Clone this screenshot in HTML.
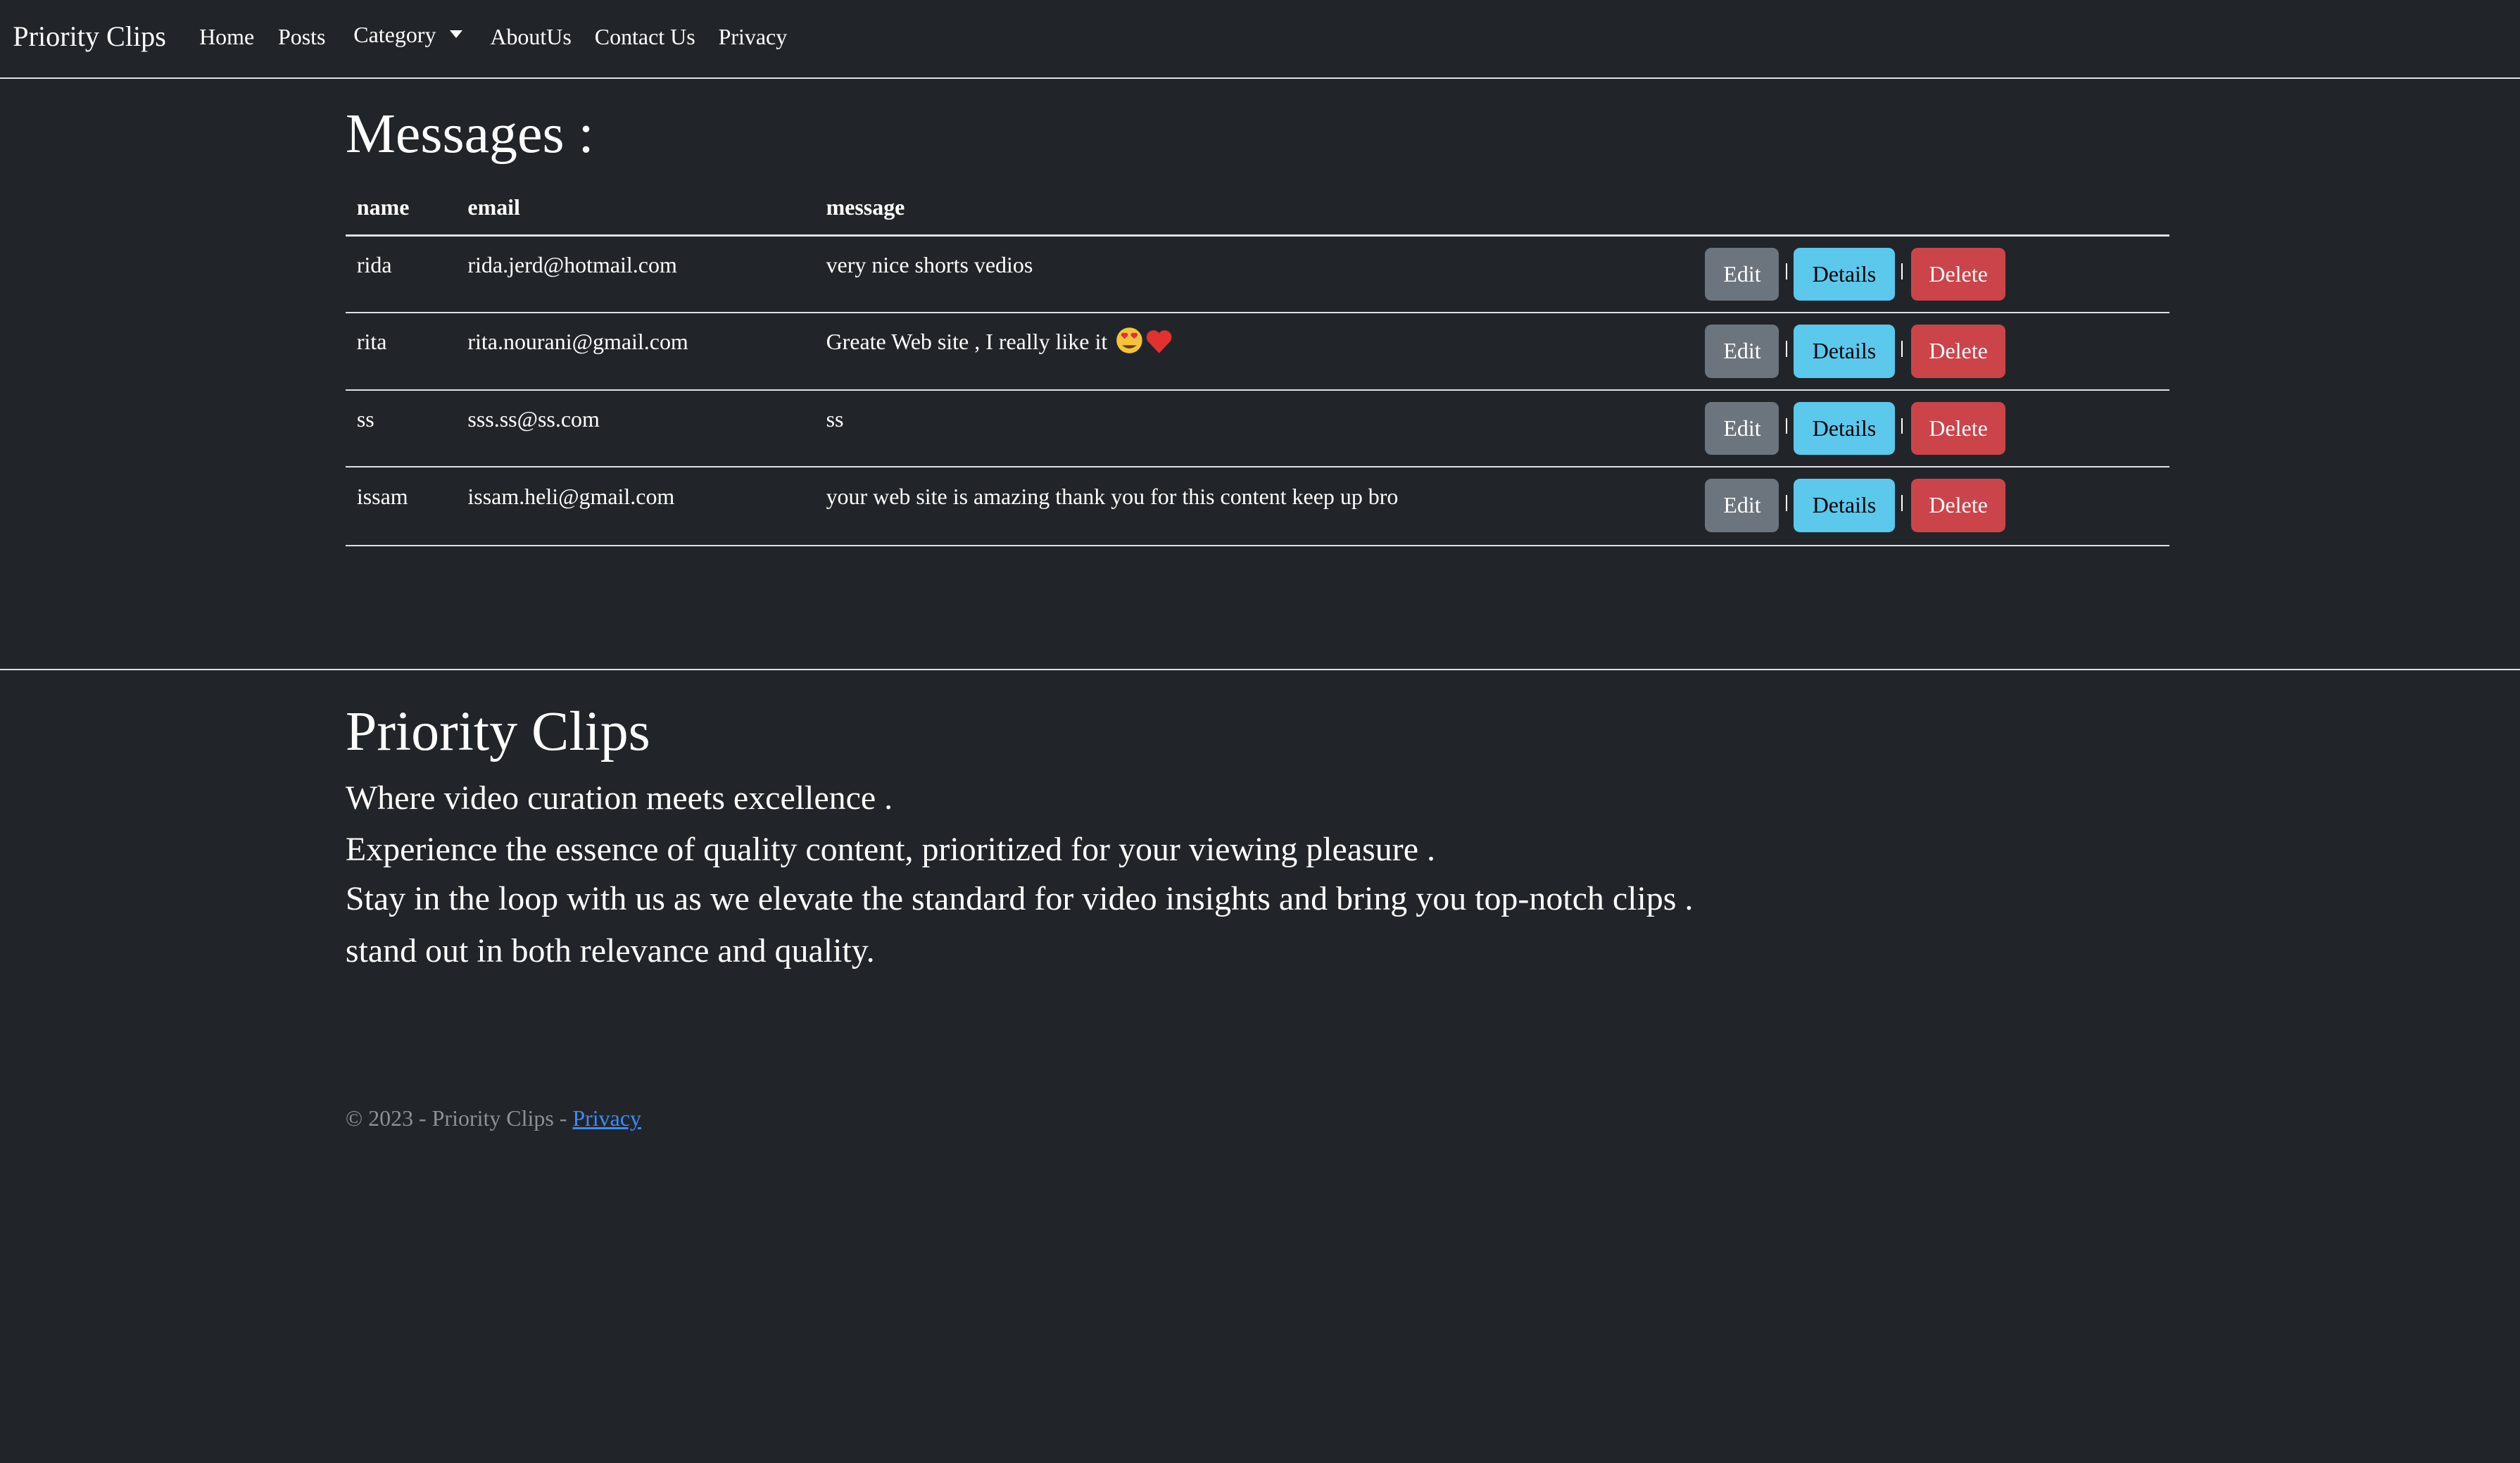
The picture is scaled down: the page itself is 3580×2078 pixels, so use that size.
<!DOCTYPE html>
<html><head><meta charset="utf-8"><style>
html,body{margin:0;padding:0;background:#212529;}
body{width:3580px;height:2078px;overflow:hidden;}
#w{zoom:2.2832;width:1568px;height:910px;position:relative;font-family:"Liberation Serif",serif;color:#fff;}
.a{position:absolute;white-space:nowrap;line-height:1;}
.hl{position:absolute;height:1px;background:#dee2e6;}
.btn{position:absolute;height:33px;border-radius:4px;font-size:14px;line-height:33px;text-align:center;}
.e{background:#6c757d;color:#fff;left:1061px;width:46px;}
.d{background:#5bc8ec;color:#000;left:1116px;width:63px;}
.x{background:#cb444a;color:#fff;left:1189px;width:59px;}
.s{position:absolute;width:1px;height:10px;background:#fff;}
.r{font-size:14px;}
</style></head><body><div id="w">
<div class="a" style="left:8px;top:14px;font-size:17.6px">Priority Clips</div>
<div class="a" style="left:124px;top:16px;font-size:14px">Home</div>
<div class="a" style="left:173px;top:16px;font-size:14px">Posts</div>
<div class="a" style="left:220px;top:15px;font-size:14px">Category</div>
<div class="a" style="left:280px;top:19px;width:0;height:0;border-left:4px solid transparent;border-right:4px solid transparent;border-top:5px solid #fff"></div>
<div class="a" style="left:305px;top:16px;font-size:14px">AboutUs</div>
<div class="a" style="left:370px;top:16px;font-size:14px">Contact Us</div>
<div class="a" style="left:447px;top:16px;font-size:14px">Privacy</div>
<div class="hl" style="left:0;top:48px;width:1568px"></div>
<div class="a" style="left:215px;top:66px;font-size:35px">Messages :</div>
<div class="a" style="left:222px;top:122px;font-size:14px;font-weight:bold">name</div>
<div class="a" style="left:291px;top:122px;font-size:14px;font-weight:bold">email</div>
<div class="a" style="left:514px;top:122px;font-size:14px;font-weight:bold">message</div>
<div class="hl" style="left:215px;top:146px;width:1135px"></div>

<div class="a r" style="left:222px;top:158px">rida</div>
<div class="a r" style="left:291px;top:158px">rida.jerd@hotmail.com</div>
<div class="a r" style="left:514px;top:158px">very nice shorts vedios</div>
<div class="btn e" style="top:154px">Edit</div><div class="s" style="left:1111px;top:164px"></div>
<div class="btn d" style="top:154px">Details</div><div class="s" style="left:1183px;top:164px"></div>
<div class="btn x" style="top:154px">Delete</div>
<div class="hl" style="left:215px;top:194px;width:1135px"></div>

<div class="a r" style="left:222px;top:206px">rita</div>
<div class="a r" style="left:291px;top:206px">rita.nourani@gmail.com</div>
<div class="a r" style="left:514px;top:206px">Greate Web site , I really like it</div>
<svg class="a" style="left:694px;top:203px" width="38" height="18" viewBox="0 0 38 18"><circle cx="8.5" cy="9" r="8" fill="#f5c33b"/><path d="M4 12 Q8.5 16 13 12Z" fill="#6b3a1a"/><path d="M5.5 8 l-2-2 a1.3 1.3 0 0 1 2-1.5 a1.3 1.3 0 0 1 2 1.5z" fill="#e0303a"/><path d="M11.5 8 l-2-2 a1.3 1.3 0 0 1 2-1.5 a1.3 1.3 0 0 1 2 1.5z" fill="#e0303a"/><path d="M27 17 L20 9.5 A4 4 0 0 1 27 4.5 A4 4 0 0 1 34 9.5Z" fill="#e2312f"/></svg>
<div class="btn e" style="top:202px">Edit</div><div class="s" style="left:1111px;top:212px"></div>
<div class="btn d" style="top:202px">Details</div><div class="s" style="left:1183px;top:212px"></div>
<div class="btn x" style="top:202px">Delete</div>
<div class="hl" style="left:215px;top:242px;width:1135px"></div>

<div class="a r" style="left:222px;top:254px">ss</div>
<div class="a r" style="left:291px;top:254px">sss.ss@ss.com</div>
<div class="a r" style="left:514px;top:254px">ss</div>
<div class="btn e" style="top:250px">Edit</div><div class="s" style="left:1111px;top:260px"></div>
<div class="btn d" style="top:250px">Details</div><div class="s" style="left:1183px;top:260px"></div>
<div class="btn x" style="top:250px">Delete</div>
<div class="hl" style="left:215px;top:290px;width:1135px"></div>

<div class="a r" style="left:222px;top:302px">issam</div>
<div class="a r" style="left:291px;top:302px">issam.heli@gmail.com</div>
<div class="a r" style="left:514px;top:302px">your web site is amazing thank you for this content keep up bro</div>
<div class="btn e" style="top:298px">Edit</div><div class="s" style="left:1111px;top:308px"></div>
<div class="btn d" style="top:298px">Details</div><div class="s" style="left:1183px;top:308px"></div>
<div class="btn x" style="top:298px">Delete</div>
<div class="hl" style="left:215px;top:339px;width:1135px"></div>

<div class="hl" style="left:0;top:416px;width:1568px"></div>
<div class="a" style="left:215px;top:438px;font-size:35px">Priority Clips</div>
<div class="a" style="left:215px;top:486px;font-size:21px">Where video curation meets excellence .</div>
<div class="a" style="left:215px;top:518px;font-size:21px">Experience the essence of quality content, prioritized for your viewing pleasure .</div>
<div class="a" style="left:215px;top:549px;font-size:21px">Stay in the loop with us as we elevate the standard for video insights and bring you top-notch clips .</div>
<div class="a" style="left:215px;top:581px;font-size:21px">stand out in both relevance and quality.</div>
<div class="a" style="left:215px;top:689px;font-size:14px;color:#8c9196">© 2023 - Priority Clips - <span style="color:#3d8bfd;text-decoration:underline">Privacy</span></div>
</div></body></html>
